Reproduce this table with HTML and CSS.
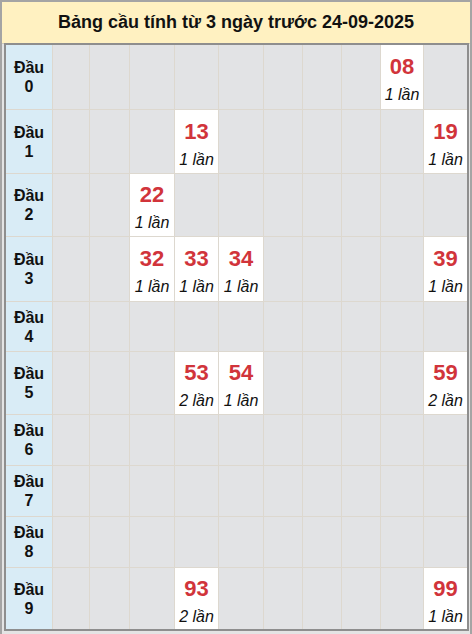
FILE: index.html
```html
<!DOCTYPE html>
<html lang="vi">
<head>
  <meta charset="UTF-8" />
  <meta name="viewport" content="width=device-width, initial-scale=1.0" />
  <title>Bảng cầu tính từ 3 ngày trước</title>
  <link rel="stylesheet" href="styles.css">
</head>
<body>
  <div class="frame">
    <div class="title">Bảng cầu tính từ 3 ngày trước 24-09-2025</div>

    <div class="board">
      <!-- Đầu 0 -->
      <div class="head">Đầu<br>0</div>
      <div></div><div></div><div></div><div></div><div></div><div></div><div></div><div></div>
      <div class="hit"><b>08</b><i>1 lần</i></div>
      <div></div>

      <!-- Đầu 1 -->
      <div class="head">Đầu<br>1</div>
      <div></div><div></div><div></div>
      <div class="hit"><b>13</b><i>1 lần</i></div>
      <div></div><div></div><div></div><div></div><div></div>
      <div class="hit"><b>19</b><i>1 lần</i></div>

      <!-- Đầu 2 -->
      <div class="head">Đầu<br>2</div>
      <div></div><div></div>
      <div class="hit"><b>22</b><i>1 lần</i></div>
      <div></div><div></div><div></div><div></div><div></div><div></div><div></div>

      <!-- Đầu 3 -->
      <div class="head">Đầu<br>3</div>
      <div></div><div></div>
      <div class="hit"><b>32</b><i>1 lần</i></div>
      <div class="hit"><b>33</b><i>1 lần</i></div>
      <div class="hit"><b>34</b><i>1 lần</i></div>
      <div></div><div></div><div></div><div></div>
      <div class="hit"><b>39</b><i>1 lần</i></div>

      <!-- Đầu 4 -->
      <div class="head">Đầu<br>4</div>
      <div></div><div></div><div></div><div></div><div></div><div></div><div></div><div></div><div></div><div></div>

      <!-- Đầu 5 -->
      <div class="head">Đầu<br>5</div>
      <div></div><div></div><div></div>
      <div class="hit"><b>53</b><i>2 lần</i></div>
      <div class="hit"><b>54</b><i>1 lần</i></div>
      <div></div><div></div><div></div><div></div>
      <div class="hit"><b>59</b><i>2 lần</i></div>

      <!-- Đầu 6 -->
      <div class="head">Đầu<br>6</div>
      <div></div><div></div><div></div><div></div><div></div><div></div><div></div><div></div><div></div><div></div>

      <!-- Đầu 7 -->
      <div class="head">Đầu<br>7</div>
      <div></div><div></div><div></div><div></div><div></div><div></div><div></div><div></div><div></div><div></div>

      <!-- Đầu 8 -->
      <div class="head">Đầu<br>8</div>
      <div></div><div></div><div></div><div></div><div></div><div></div><div></div><div></div><div></div><div></div>

      <!-- Đầu 9 -->
      <div class="head">Đầu<br>9</div>
      <div></div><div></div><div></div>
      <div class="hit"><b>93</b><i>2 lần</i></div>
      <div></div><div></div><div></div><div></div><div></div>
      <div class="hit"><b>99</b><i>1 lần</i></div>
    </div>
  </div>
</body>
</html>
```

FILE: styles.css
```css
:root {
  --frame-line: #a4a4a4;
  --board-line: #8e8e8e;
  --grid-line: #ddd8cf;
  --title-bg: #fff1c1;
  --head-bg: #d9ecf6;
  --cell-bg: #e2e3e5;
  --num-color: #d1343b;
}
* { box-sizing: border-box; margin: 0; padding: 0; }
body {
  font-family: 'Liberation Sans', Arial, sans-serif;
  background: #fff;
  color: #111;
}
.frame {
  width: 472px;
  height: 634px;
  border: 2px solid var(--frame-line);
  border-bottom: 0;
  background: #e4e4e4;
}
.title {
  height: 42px;
  background: var(--title-bg);
  border-bottom: 1px solid #cfc9b8;
  display: flex;
  align-items: center;
  justify-content: center;
  font-size: 18px;
  font-weight: 700;
  color: #111;
}
.board {
  width: 465px;
  margin: -1px 1px 0 2px;
  border: 2px solid var(--board-line);
  background: var(--grid-line);
  display: grid;
  grid-template-columns: 46px 36px 39px 44px 43px 44px 38px 38px 38px 42px 43px;
  grid-template-rows: 64px 63px 62px 64px 49px 62px 50px 50px 50px 61px;
  gap: 1px;
}
.board > div {
  background: var(--cell-bg);
}
.board > .head {
  background: var(--head-bg);
  display: flex;
  align-items: center;
  justify-content: center;
  text-align: center;
  font-size: 16px;
  font-weight: 700;
  line-height: 19px;
}
.board > .hit {
  background: #fff;
  display: flex;
  flex-direction: column;
  align-items: center;
  justify-content: center;
  padding-top: 8px;
}
.hit b {
  display: block;
  font-size: 22px;
  line-height: 28px;
  color: var(--num-color);
}
.hit i {
  display: block;
  font-size: 16px;
  line-height: 28px;
  white-space: nowrap;
}
```
